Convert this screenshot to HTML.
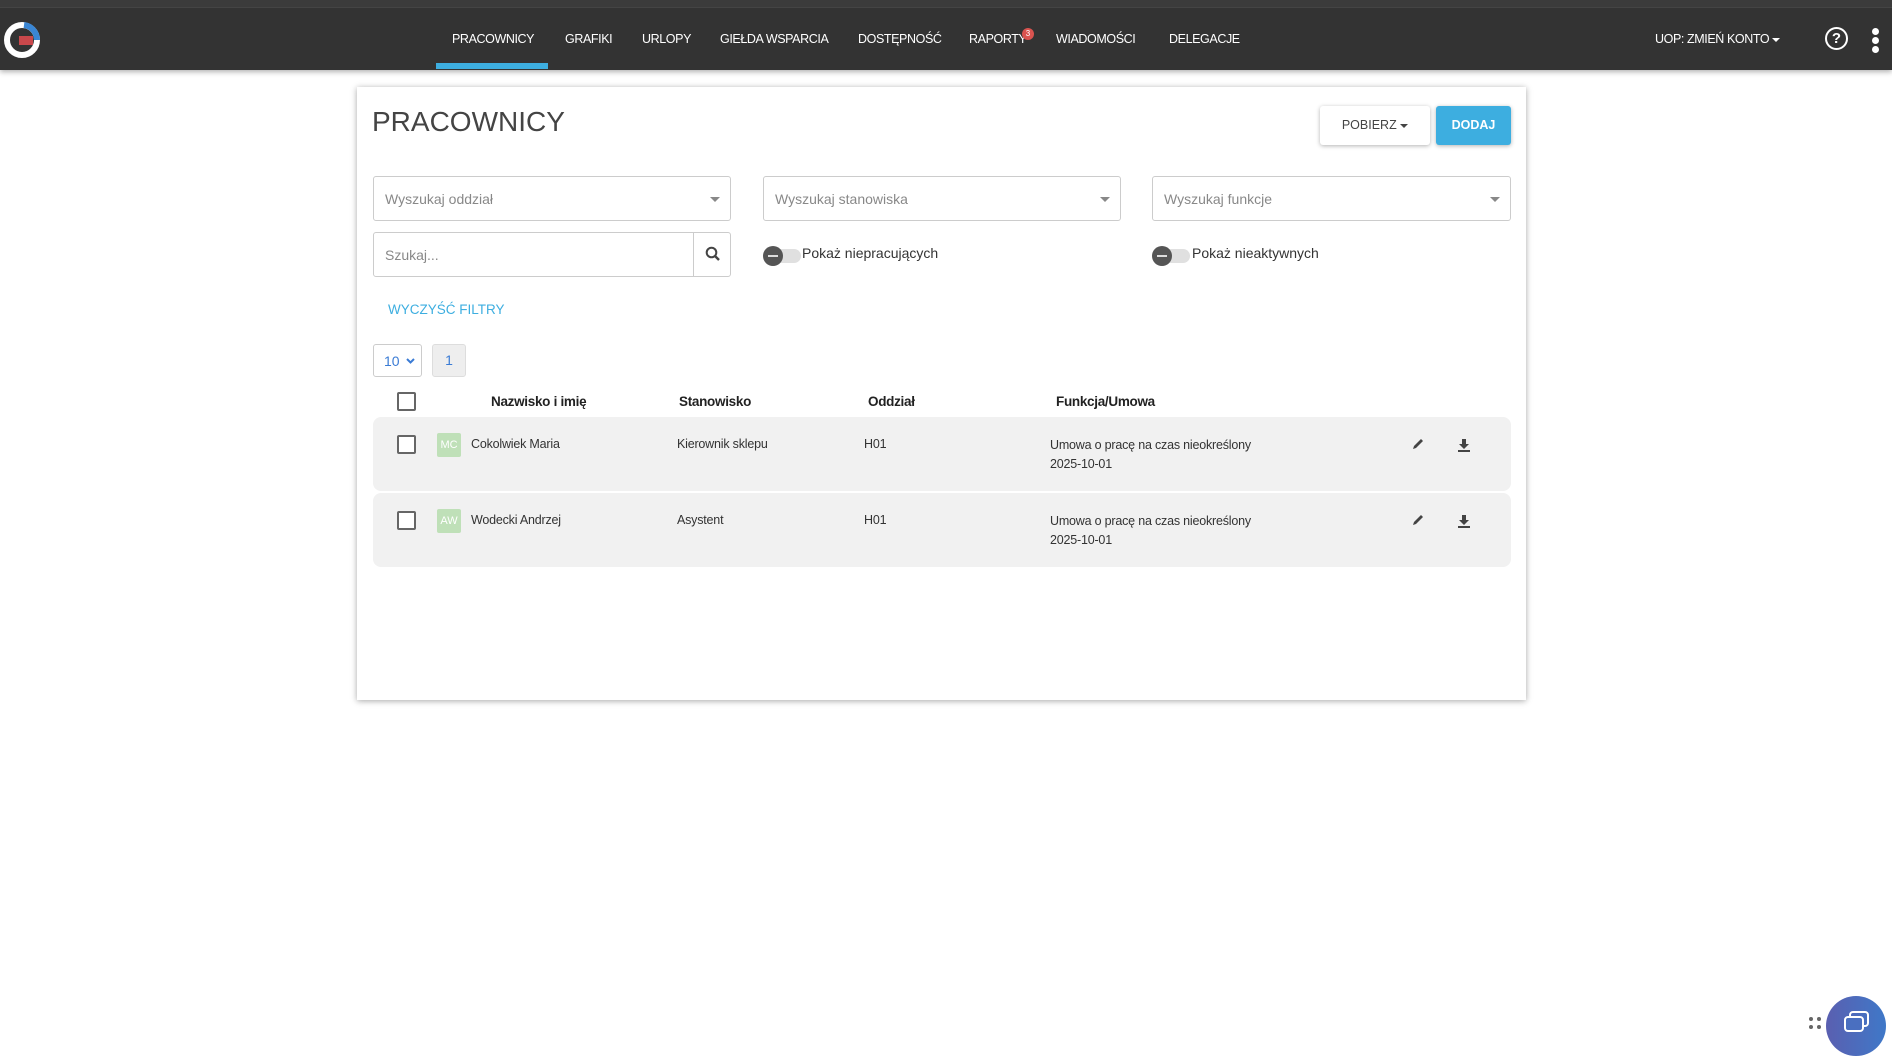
<!DOCTYPE html>
<html><head><meta charset="utf-8"><style>
*{box-sizing:border-box;margin:0;padding:0}
body{width:1892px;height:1034px;overflow:hidden;background:#fff;font-family:"Liberation Sans",sans-serif;color:#333;position:relative}
.top{position:absolute;left:0;top:0;width:1892px;height:70px;background:#333;box-shadow:0 2px 5px rgba(0,0,0,.3)}
.top:before{content:"";position:absolute;left:0;top:0;right:0;height:7px;background:#3b3b3b;border-bottom:1px solid #444}
.nav{position:absolute;top:32px;color:#fff;font-size:12.5px;letter-spacing:-.4px;white-space:nowrap}
.ul{position:absolute;left:436px;top:63px;width:112px;height:6px;background:#3daee0}
.badge{position:absolute;left:1022px;top:28px;width:12px;height:12px;border-radius:6px;background:#d9534f;color:#fff;font-size:8px;text-align:center;line-height:12px}
.card{position:absolute;left:357px;top:87px;width:1169px;height:613px;background:#fff;box-shadow:0 1px 6px rgba(0,0,0,.35)}
.abs{position:absolute;white-space:nowrap}
.inp{position:absolute;border:1px solid #ccc;border-radius:3px;height:45px;font-size:14px;color:#888;padding:14px 11px;background:#fff}
.caret{position:absolute;right:10px;top:20px;border-left:5px solid transparent;border-right:5px solid transparent;border-top:5px solid #888}
.tog{position:absolute;width:36px;height:14px;border-radius:7px;background:#e0e0e0}
.tog i{position:absolute;left:-2px;top:-3px;width:20px;height:20px;border-radius:10px;background:#555}
.tog i:after{content:"";position:absolute;left:5px;top:9px;width:10px;height:2px;background:#ddd}
.cb{position:absolute;width:19px;height:19px;border:2px solid #666;border-radius:2px;background:#fff}
.row{position:absolute;left:373px;width:1138px;background:#f1f1f1;border-radius:8px}
.t{position:absolute;font-size:12.5px;color:#333;white-space:nowrap;letter-spacing:-.2px}
.th{position:absolute;top:394px;font-size:13.5px;font-weight:bold;color:#222;letter-spacing:-.3px}
.av{position:absolute;width:24px;height:24px;background:#bfe0b8;color:#fff;font-size:11px;text-align:center;line-height:24px;border-radius:2px}
</style></head><body>
<div class="top">
<svg class="abs" style="left:2px;top:20px" width="40" height="40" viewBox="0 0 40 40"><circle cx="20" cy="20" r="15" fill="none" stroke="#fff" stroke-width="6"/><path d="M22 5 A15 15 0 0 1 35 20" fill="none" stroke="#3a86d4" stroke-width="6"/><rect x="17" y="16" width="14" height="9" fill="#c9484b"/></svg>
<div class="nav" style="left:452px">PRACOWNICY</div>
<div class="nav" style="left:565px">GRAFIKI</div>
<div class="nav" style="left:642px">URLOPY</div>
<div class="nav" style="left:720px">GIEŁDA WSPARCIA</div>
<div class="nav" style="left:858px">DOSTĘPNOŚĆ</div>
<div class="nav" style="left:969px">RAPORTY</div>
<div class="badge">3</div>
<div class="nav" style="left:1056px">WIADOMOŚCI</div>
<div class="nav" style="left:1169px">DELEGACJE</div>
<div class="ul"></div>
<div class="nav" style="left:1655px">UOP: ZMIEŃ KONTO <span style="display:inline-block;border-left:4px solid transparent;border-right:4px solid transparent;border-top:4px solid #fff;vertical-align:middle"></span></div>
<div class="abs" style="left:1825px;top:27px;width:23px;height:23px;border:2px solid #fff;border-radius:50%;color:#fff;font-size:15px;font-weight:bold;text-align:center;line-height:19px">?</div>
<div class="abs" style="left:1872px;top:28px;width:7px;height:7px;border-radius:4px;background:#fff;box-shadow:0 9px 0 #fff,0 18px 0 #fff"></div>
</div>
<div class="card">
<div class="abs" style="left:15px;top:19px;font-size:28px;color:#444">PRACOWNICY</div>
<div class="abs" style="left:963px;top:19px;width:110px;height:39px;background:#fff;border-radius:3px;box-shadow:0 1px 4px rgba(0,0,0,.3);font-size:12.5px;text-align:center;line-height:39px;color:#444">POBIERZ <span style="display:inline-block;border-left:4px solid transparent;border-right:4px solid transparent;border-top:4px solid #444;vertical-align:middle"></span></div>
<div class="abs" style="left:1079px;top:19px;width:75px;height:39px;background:#3daee0;border-radius:3px;box-shadow:0 1px 4px rgba(0,0,0,.3);font-size:12.5px;font-weight:bold;text-align:center;line-height:39px;color:#fff">DODAJ</div>
</div>
<div class="inp" style="left:373px;top:176px;width:358px">Wyszukaj oddział<div class="caret"></div></div>
<div class="inp" style="left:763px;top:176px;width:358px">Wyszukaj stanowiska<div class="caret"></div></div>
<div class="inp" style="left:1152px;top:176px;width:359px">Wyszukaj funkcje<div class="caret"></div></div>
<div class="inp" style="left:373px;top:232px;width:358px">Szukaj...<div class="abs" style="left:319px;top:0;width:1px;height:43px;background:#ccc"></div>
<svg class="abs" style="left:331px;top:13px" width="16" height="16" viewBox="0 0 16 16"><circle cx="6.5" cy="6.5" r="4.8" fill="none" stroke="#444" stroke-width="2"/><path d="M10 10l4 4" stroke="#444" stroke-width="2.4"/></svg></div>
<div class="tog" style="left:765px;top:249px"><i></i></div>
<div class="abs" style="left:802px;top:245px;font-size:14px;color:#333">Pokaż niepracujących</div>
<div class="tog" style="left:1154px;top:249px"><i></i></div>
<div class="abs" style="left:1192px;top:245px;font-size:14px;color:#333">Pokaż nieaktywnych</div>
<div class="abs" style="left:388px;top:302px;font-size:13.5px;color:#3daee0">WYCZYŚĆ FILTRY</div>
<div class="abs" style="left:373px;top:344px;width:49px;height:33px;border:1px solid #ccc;border-radius:3px;color:#3a7bd5;font-size:14px;padding:8px 10px">10
<svg style="position:absolute;left:32px;top:13px" width="9" height="7" viewBox="0 0 9 7"><path d="M1 1l3.5 3.5L8 1" fill="none" stroke="#3a7bd5" stroke-width="2"/></svg></div>
<div class="abs" style="left:432px;top:344px;width:34px;height:33px;border:1px solid #ddd;background:#eee;border-radius:3px;color:#3a7bd5;font-size:14px;text-align:center;line-height:31px">1</div>
<div class="cb" style="left:397px;top:392px"></div>
<div class="th" style="left:491px">Nazwisko i imię</div>
<div class="th" style="left:679px">Stanowisko</div>
<div class="th" style="left:868px">Oddział</div>
<div class="th" style="left:1056px">Funkcja/Umowa</div>
<div class="row" style="top:417px;height:74px"></div>
<div class="row" style="top:493px;height:74px"></div>
<div class="cb" style="left:397px;top:435px"></div>
<div class="av" style="left:437px;top:433px">MC</div>
<div class="t" style="left:471px;top:437px">Cokolwiek Maria</div>
<div class="t" style="left:677px;top:437px">Kierownik sklepu</div>
<div class="t" style="left:864px;top:437px">H01</div>
<div class="t" style="left:1050px;top:436px;line-height:19px">Umowa o pracę na czas nieokreślony<br>2025-10-01</div>
<div class="cb" style="left:397px;top:511px"></div>
<div class="av" style="left:437px;top:509px">AW</div>
<div class="t" style="left:471px;top:513px">Wodecki Andrzej</div>
<div class="t" style="left:677px;top:513px">Asystent</div>
<div class="t" style="left:864px;top:513px">H01</div>
<div class="t" style="left:1050px;top:512px;line-height:19px">Umowa o pracę na czas nieokreślony<br>2025-10-01</div>
<svg class="abs" style="left:1411px;top:437px" width="14" height="14" viewBox="0 0 14 14"><path d="M2 12l1-3 7-7 2 2-7 7z" fill="#444"/></svg>
<svg class="abs" style="left:1457px;top:438px" width="14" height="14" viewBox="0 0 14 14"><path d="M5 1h4v5h3l-5 5-5-5h3z M1 12h12v2H1z" fill="#444"/></svg>
<svg class="abs" style="left:1411px;top:513px" width="14" height="14" viewBox="0 0 14 14"><path d="M2 12l1-3 7-7 2 2-7 7z" fill="#444"/></svg>
<svg class="abs" style="left:1457px;top:514px" width="14" height="14" viewBox="0 0 14 14"><path d="M5 1h4v5h3l-5 5-5-5h3z M1 12h12v2H1z" fill="#444"/></svg>
<div class="abs" style="left:1809px;top:1017px;width:4px;height:4px;border-radius:2px;background:#666;box-shadow:8px 0 0 #666,0 8px 0 #666,8px 8px 0 #666"></div>
<div class="abs" style="left:1826px;top:996px;width:60px;height:60px;border-radius:30px;background:linear-gradient(90deg,#5a5fb0,#3f78c8)"></div>
<svg class="abs" style="left:1843px;top:1010px" width="28" height="24" viewBox="0 0 28 24"><rect x="7" y="2" width="18" height="14" rx="3" fill="none" stroke="#fff" stroke-width="2"/><rect x="2" y="7" width="18" height="14" rx="3" fill="#4a6fc0" stroke="#fff" stroke-width="2"/></svg>
</body></html>
